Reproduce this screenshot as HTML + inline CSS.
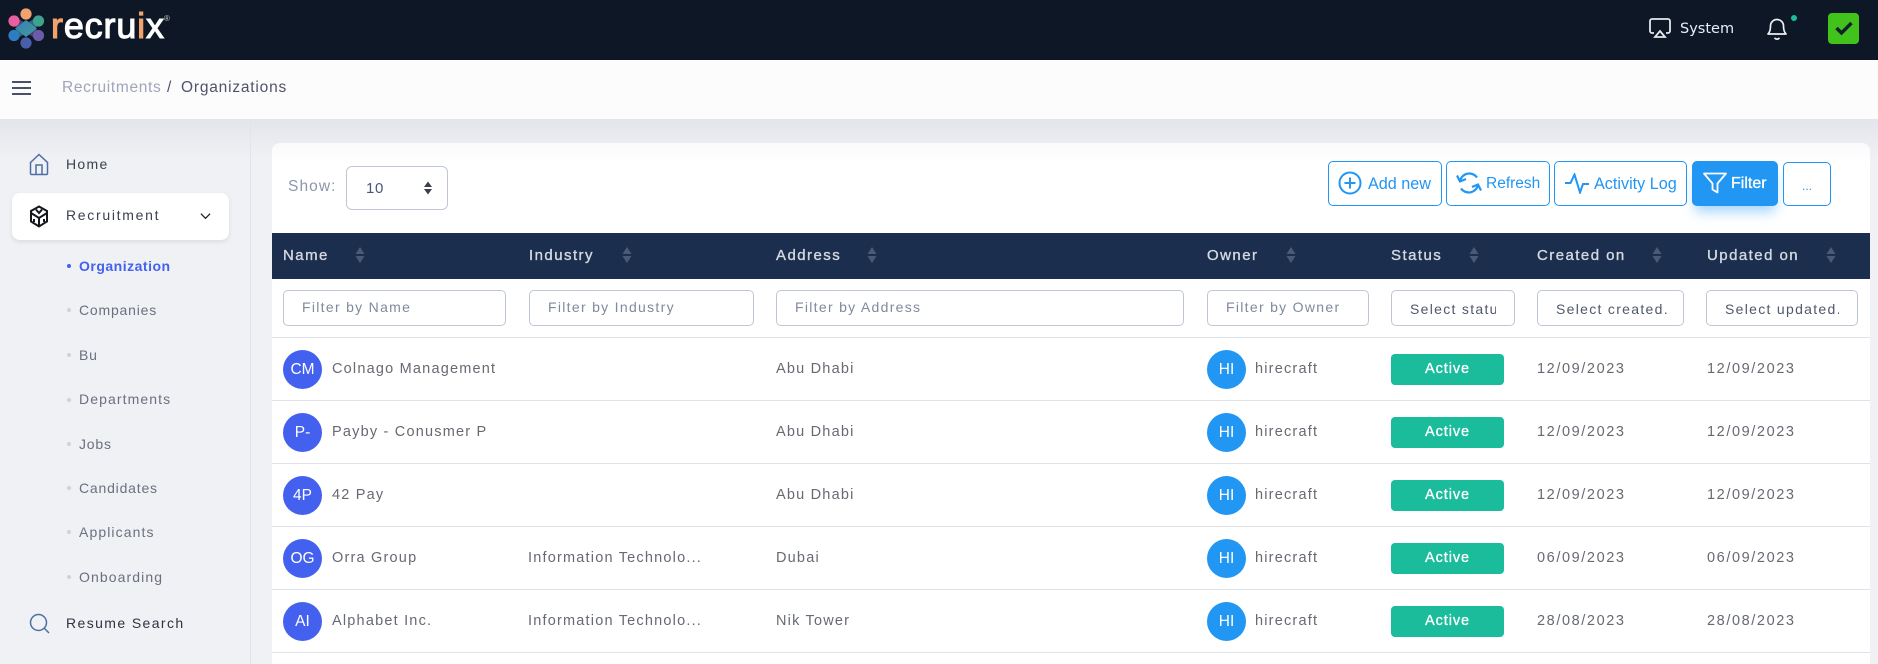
<!DOCTYPE html>
<html lang="en"><head><meta charset="utf-8"><title>Recruix - Organizations</title>
<style>
*{box-sizing:border-box}
html,body{margin:0;padding:0;width:1878px;height:664px;overflow:hidden;background:#f0f1f4;font-family:"Liberation Sans",sans-serif}
.a{position:absolute;white-space:nowrap}
.t{position:absolute;white-space:nowrap;line-height:20px;height:20px}
.nav{left:66px;font-size:14px;letter-spacing:1.3px;color:#3c4150}
.sub{left:79px;font-size:14px;letter-spacing:.8px;color:#6b7080}
.b{position:absolute;width:4px;height:4px;border-radius:50%;background:#d0d2d8;left:67px}
.btn{position:absolute;top:161px;height:45px;border:1px solid #2196f3;border-radius:5px;background:#fff}
.bt{position:absolute;top:174px;line-height:20px;font-size:16px;color:#2196f3;white-space:nowrap}
.th{position:absolute;top:246px;line-height:20px;font-size:15px;letter-spacing:1.45px;color:#d3d8e1;white-space:nowrap;-webkit-text-stroke:.35px #d3d8e1}
.sort{position:absolute;top:247px;width:10px;height:16px}
.inp{position:absolute;top:290px;height:36px;border:1px solid #bfc7d5;border-radius:5px;background:#fff;font-size:14px;line-height:33px;color:#7f8a9c;letter-spacing:1.3px;overflow:hidden;white-space:nowrap}
.row{position:absolute;left:272px;width:1598px;height:63px;border-bottom:1px solid #e0e2ea}
.av{position:absolute;left:11px;top:12px;width:39px;height:39px;border-radius:50%;background:#4361ee;color:#fff;font-size:15.500px;text-align:center;line-height:40px}
.av2{left:935px;background:#2196f3}
.c{position:absolute;top:21px;line-height:20px;font-size:14.500px;letter-spacing:1.2px;color:#666a72;white-space:nowrap}
.n{left:60px}.i{left:256px}.ad{left:504px}.o{left:983px}.d1{left:1265px;letter-spacing:1.6px}.d2{left:1435px;letter-spacing:1.6px}
.bd{position:absolute;left:1119px;top:16px;width:113px;height:31px;background:#1abc9c;border-radius:4px;color:#fff;font-size:14.500px;letter-spacing:.9px;text-align:center;line-height:30px;-webkit-text-stroke:.3px #fff}
</style></head>
<body>
<div class="a" style="left:0;top:0;width:1878px;height:60px;background:#0d1726"></div>
<svg class="a" style="left:0;top:0" width="190" height="60" viewBox="0 0 190 60">
<defs><linearGradient id="g" x1="0" y1="0" x2="1" y2="1"><stop offset="0" stop-color="#3a7fb5"/><stop offset="1" stop-color="#3f9a9c"/></linearGradient></defs>
<path d="M14 21L38.500 35.500" stroke="#4d3f6f" stroke-width="8"/>
<path d="M38.500 21L14 35.500" stroke="#2f6a7c" stroke-width="8"/>
<polygon points="26,20 37,28.500 26,37 15,28.500" fill="url(#g)"/>
<circle cx="26" cy="14" r="5.600" fill="#f3a26d"/>
<circle cx="38.500" cy="21" r="5.600" fill="#3fa18f"/>
<circle cx="14" cy="21" r="5.600" fill="#e85f9f"/>
<circle cx="14" cy="35.500" r="5.600" fill="#2f7cc2"/>
<circle cx="38.500" cy="35.500" r="5.600" fill="#6b5bab"/>
<circle cx="26" cy="43" r="5.600" fill="#4a5eab"/>
<text x="51" y="38" font-family="Liberation Sans,sans-serif" font-size="36" fill="#fff" stroke="#fff" stroke-width="1.100" textLength="113" lengthAdjust="spacing"><tspan fill="#f3a26d" stroke="#f3a26d">r</tspan>ecru<tspan fill="#f3a26d" stroke="#f3a26d">i</tspan>x</text>
<text x="164" y="21" font-family="Liberation Sans,sans-serif" font-size="8" fill="#ccc">®</text>
</svg>
<svg class="a" style="left:1649px;top:18px" width="22" height="21" viewBox="0 0 22 21" fill="none" stroke="#e6e8ec" stroke-width="1.800"><path d="M5 15H3a2 2 0 0 1-2-2V3a2 2 0 0 1 2-2h16a2 2 0 0 1 2 2v10a2 2 0 0 1-2 2h-2"/><path d="M11 13l5 6H6z"/></svg>
<div class="t" style="left:1680px;top:19px;font-family:'DejaVu Sans',sans-serif;font-size:14.500px;color:#e6eefc">System</div>
<svg class="a" style="left:1766px;top:16px" width="22" height="25" viewBox="0 0 22 25" fill="none" stroke="#eceef2" stroke-width="1.700"><path d="M2 18c2-2 2.500-4 2.500-8a6.500 6.500 0 0 1 13 0c0 4 .5 6 2.500 8z" stroke-linejoin="round"/><path d="M8.500 22c1.500 1.500 3.500 1.500 5 0"/></svg>
<div class="a" style="left:1791px;top:15px;width:6px;height:6px;border-radius:50%;background:#1abc9c"></div>
<div class="a" style="left:1828px;top:13px;width:31px;height:31px;border-radius:4px;background:#41c31c"></div>
<svg class="a" style="left:1835px;top:21px" width="18" height="15" viewBox="0 0 18 15" fill="none" stroke="#12202e" stroke-width="3.400"><path d="M1.500 7l5 5L16.500 2"/></svg>

<div class="a" style="left:0;top:60px;width:1878px;height:59px;background:#fcfcfc"></div>
<div class="a" style="left:12px;top:81px;width:19px;height:2px;background:#4a4f6e"></div>
<div class="a" style="left:12px;top:87px;width:19px;height:2px;background:#4a4f6e"></div>
<div class="a" style="left:12px;top:93px;width:19px;height:2px;background:#4a4f6e"></div>
<div class="t" style="left:62px;top:78px;font-size:15.500px;letter-spacing:.68px;color:#a0a4bc">Recruitments</div>
<div class="t" style="left:167px;top:78px;font-size:15.500px;color:#50526c">/</div>
<div class="t" style="left:181px;top:78px;font-size:15.500px;letter-spacing:.8px;color:#50526c">Organizations</div>

<div class="a" style="left:0;top:119px;width:1878px;height:545px;background:linear-gradient(#e3e5ec,#f0f1f4 40px,#f0f1f4)"></div>
<div class="a" style="left:250px;top:119px;width:1px;height:545px;background:#e1e4ed"></div>

<svg class="a" style="left:29px;top:153px" width="20" height="23" viewBox="0 0 20 23" fill="none" stroke="#4d6fa5" stroke-width="1.500"><path d="M1.500 9.500L10 1.500l8.500 8V20.500a1.200 1.200 0 0 1-1.200 1H2.700a1.200 1.200 0 0 1-1.200-1z"/><path d="M7 21.500V12h6v9.500"/></svg>
<div class="t nav" style="top:154px">Home</div>
<div class="a" style="left:12px;top:193px;width:217px;height:47px;background:#fff;border-radius:8px;box-shadow:0 2px 4px rgba(60,70,100,.12)"></div>
<svg class="a" style="left:29px;top:205px" width="20" height="23" viewBox="0 0 20 23" fill="none" stroke="#14161c" stroke-width="2"><path d="M10 1.500l8 4.500v10.500l-8 5-8-5V6z"/><path d="M2 8l8 5 8-5M10 13v8.500M7 4.500l3 3.500 3-3.500"/><path d="M5 14v3M15 14v3"/></svg>
<div class="t nav" style="top:205px;letter-spacing:1.7px">Recruitment</div>
<svg class="a" style="left:200px;top:212px" width="11" height="8" viewBox="0 0 12 8" fill="none" stroke="#222" stroke-width="1.400"><path d="M1 1.500l5 5 5-5"/></svg>

<div class="b" style="top:264px;background:#4361ee"></div><div class="t sub" style="top:256px;color:#4361ee;font-weight:bold;letter-spacing:.5px">Organization</div>
<div class="b" style="top:308px"></div><div class="t sub" style="top:300px">Companies</div>
<div class="b" style="top:353px"></div><div class="t sub" style="top:345px">Bu</div>
<div class="b" style="top:398px"></div><div class="t sub" style="top:389px;letter-spacing:1.1px">Departments</div>
<div class="b" style="top:442px"></div><div class="t sub" style="top:434px">Jobs</div>
<div class="b" style="top:486px"></div><div class="t sub" style="top:478px">Candidates</div>
<div class="b" style="top:530px"></div><div class="t sub" style="top:522px;letter-spacing:1.1px">Applicants</div>
<div class="b" style="top:575px"></div><div class="t sub" style="top:567px;letter-spacing:1.1px">Onboarding</div>
<svg class="a" style="left:29px;top:613px" width="21" height="21" viewBox="0 0 21 21" fill="none" stroke="#4d6fa5" stroke-width="1.500"><circle cx="9.500" cy="9.500" r="8"/><path d="M15.500 15.500l4.500 4.500"/></svg>
<div class="t nav" style="top:613px;color:#2e3340;letter-spacing:1.4px">Resume Search</div>

<!-- card -->
<div class="a" style="left:272px;top:143px;width:1598px;height:521px;border-radius:8px 8px 0 0;background:linear-gradient(#fafafc,#fff 20px)"></div>
<div class="t" style="left:288px;top:177px;font-size:15.500px;letter-spacing:1.100px;color:#8d97a8">Show:</div>
<div class="a" style="left:346px;top:166px;width:102px;height:44px;border:1px solid #bfc7d5;border-radius:6px;background:#fff"></div>
<div class="t" style="left:366px;top:179px;font-size:15px;letter-spacing:.6px;color:#46587a">10</div>
<svg class="a" style="left:423px;top:181px" width="10" height="14" viewBox="0 0 10 14" fill="#3a3f4a"><path d="M5 .5L9 6H1zM5 13.500L1 8h8z"/></svg>

<div class="btn" style="left:1328px;width:114px"></div>
<svg class="a" style="left:1338px;top:171px" width="24" height="24" viewBox="0 0 24 24" fill="none" stroke="#2196f3" stroke-width="2"><circle cx="12" cy="12" r="10.500"/><path d="M12 6.500v11M6.500 12h11"/></svg>
<div class="bt" style="left:1368px;font-size:16.200px">Add new</div>
<div class="btn" style="left:1446px;width:104px"></div>
<svg class="a" style="left:1456px;top:171px" width="26" height="24" viewBox="0 0 26 24" fill="none" stroke="#2196f3" stroke-width="2.200"><path d="M4 10A9.500 9.500 0 0 1 21 6.500"/><path d="M1 4.500L4 10.500l6-2.500"/><path d="M22 14A9.500 9.500 0 0 1 5 17.500"/><path d="M25 19.500L22 13.500l-6 2.500"/></svg>
<div class="bt" style="left:1486px;font-size:15.500px">Refresh</div>
<div class="btn" style="left:1554px;width:133px"></div>
<svg class="a" style="left:1565px;top:173px" width="24" height="21" viewBox="0 0 24 21" fill="none" stroke="#2196f3" stroke-width="2"><path d="M0 10h5.500L9.500 1.500l5.500 18 3-8.500h6"/></svg>
<div class="bt" style="left:1594px;font-size:16.200px">Activity Log</div>
<div class="a" style="left:1692px;top:161px;width:86px;height:45px;border-radius:5px;background:#2196f3;box-shadow:0 9px 12px -3px rgba(33,150,243,.4)"></div>
<svg class="a" style="left:1703px;top:172px" width="24" height="22" viewBox="0 0 24 22" fill="none" stroke="#fff" stroke-width="1.800" stroke-linejoin="round"><path d="M1 1.500h22l-8.500 10v9l-5-3v-6z"/></svg>
<div class="bt" style="left:1731px;color:#fff;font-size:16px;-webkit-text-stroke:.3px #fff">Filter</div>
<div class="btn" style="left:1783px;width:48px;top:162px;height:44px;text-align:center;line-height:46px;font-size:12px;color:#2196f3">...</div>

<div class="a" style="left:272px;top:233px;width:1598px;height:46px;background:#1c2e4e"></div>
<div class="th" style="left:283px">Name</div>
<svg class="sort" style="left:355px" viewBox="0 0 10 16" fill="#4a5a74"><path d="M5 0l4.500 7H.5zM5 16L.5 9h9z"/></svg>
<div class="th" style="left:529px">Industry</div>
<svg class="sort" style="left:622px" viewBox="0 0 10 16" fill="#4a5a74"><path d="M5 0l4.500 7H.5zM5 16L.5 9h9z"/></svg>
<div class="th" style="left:776px">Address</div>
<svg class="sort" style="left:867px" viewBox="0 0 10 16" fill="#4a5a74"><path d="M5 0l4.500 7H.5zM5 16L.5 9h9z"/></svg>
<div class="th" style="left:1207px">Owner</div>
<svg class="sort" style="left:1286px" viewBox="0 0 10 16" fill="#4a5a74"><path d="M5 0l4.500 7H.5zM5 16L.5 9h9z"/></svg>
<div class="th" style="left:1391px">Status</div>
<svg class="sort" style="left:1469px" viewBox="0 0 10 16" fill="#4a5a74"><path d="M5 0l4.500 7H.5zM5 16L.5 9h9z"/></svg>
<div class="th" style="left:1537px">Created on</div>
<svg class="sort" style="left:1652px" viewBox="0 0 10 16" fill="#4a5a74"><path d="M5 0l4.500 7H.5zM5 16L.5 9h9z"/></svg>
<div class="th" style="left:1707px">Updated on</div>
<svg class="sort" style="left:1826px" viewBox="0 0 10 16" fill="#4a5a74"><path d="M5 0l4.500 7H.5zM5 16L.5 9h9z"/></svg>

<div class="inp" style="left:283px;width:223px;padding-left:18px">Filter by Name</div>
<div class="inp" style="left:529px;width:225px;padding-left:18px">Filter by Industry</div>
<div class="inp" style="left:776px;width:408px;padding-left:18px">Filter by Address</div>
<div class="inp" style="left:1207px;width:162px;padding-left:18px">Filter by Owner</div>
<div class="inp" style="left:1391px;width:124px;padding:2px 0 0 18px;color:#50586a"><div style="width:86px;overflow:hidden">Select status</div></div>
<div class="inp" style="left:1537px;width:147px;padding:2px 0 0 18px;color:#50586a"><div style="width:111px;overflow:hidden">Select created...</div></div>
<div class="inp" style="left:1706px;width:152px;padding:2px 0 0 18px;color:#50586a"><div style="width:114px;overflow:hidden">Select updated...</div></div>
<div class="a" style="left:272px;top:337px;width:1598px;height:1px;background:#e0e2ea"></div>

<div class="row" style="top:338px"><div class="av">CM</div><div class="c n">Colnago Management</div><div class="c ad">Abu Dhabi</div><div class="av av2">HI</div><div class="c o">hirecraft</div><div class="bd">Active</div><div class="c d1">12/09/2023</div><div class="c d2">12/09/2023</div></div>
<div class="row" style="top:401px"><div class="av">P-</div><div class="c n">Payby - Conusmer P</div><div class="c ad">Abu Dhabi</div><div class="av av2">HI</div><div class="c o">hirecraft</div><div class="bd">Active</div><div class="c d1">12/09/2023</div><div class="c d2">12/09/2023</div></div>
<div class="row" style="top:464px"><div class="av">4P</div><div class="c n">42 Pay</div><div class="c ad">Abu Dhabi</div><div class="av av2">HI</div><div class="c o">hirecraft</div><div class="bd">Active</div><div class="c d1">12/09/2023</div><div class="c d2">12/09/2023</div></div>
<div class="row" style="top:527px"><div class="av">OG</div><div class="c n">Orra Group</div><div class="c i">Information Technolo...</div><div class="c ad">Dubai</div><div class="av av2">HI</div><div class="c o">hirecraft</div><div class="bd">Active</div><div class="c d1">06/09/2023</div><div class="c d2">06/09/2023</div></div>
<div class="row" style="top:590px"><div class="av">AI</div><div class="c n">Alphabet Inc.</div><div class="c i">Information Technolo...</div><div class="c ad">Nik Tower</div><div class="av av2">HI</div><div class="c o">hirecraft</div><div class="bd">Active</div><div class="c d1">28/08/2023</div><div class="c d2">28/08/2023</div></div>
</body></html>
